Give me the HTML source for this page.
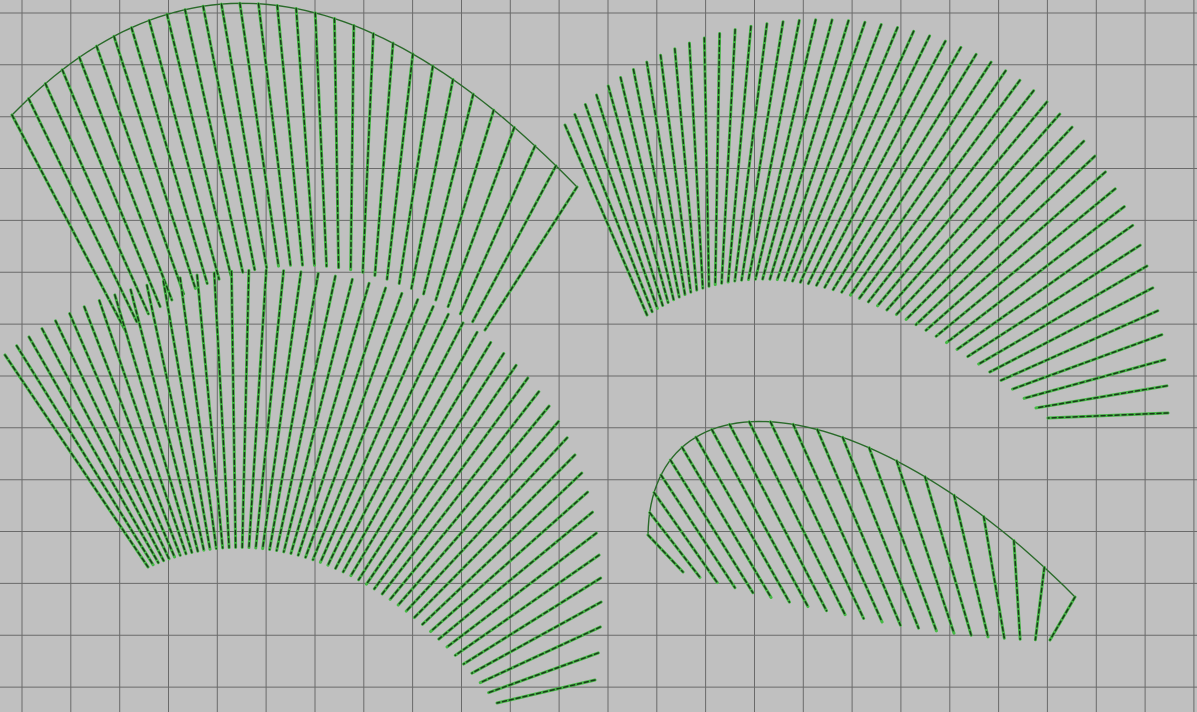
<!DOCTYPE html>
<html><head><meta charset="utf-8"><style>
html,body{margin:0;padding:0;background:#c0c0c0;width:1197px;height:712px;overflow:hidden}
svg{display:block}
</style></head><body>
<svg id="s" width="1197" height="712" xmlns="http://www.w3.org/2000/svg">
<rect width="1197" height="712" fill="#c0c0c0"/>
<g id="grid" stroke="#6a6a6a" stroke-width="1"></g>
<g id="fans" fill="none" stroke-linecap="round"></g>
</svg>
<script>
var NS="http://www.w3.org/2000/svg";
var g=document.getElementById("grid");
function ln(p,x1,y1,x2,y2,attrs){var l=document.createElementNS(NS,"line");l.setAttribute("x1",x1);l.setAttribute("y1",y1);l.setAttribute("x2",x2);l.setAttribute("y2",y2);for(var k in attrs)l.setAttribute(k,attrs[k]);p.appendChild(l);}
for(var x=22-48.83;x<1200;x+=48.83)ln(g,x.toFixed(1),0,x.toFixed(1),712,{});
for(var y=13;y<712;y+=51.85)ln(g,0,y.toFixed(1),1197,y.toFixed(1),{});
function cub(P,t){var u=1-t;return[u*u*u*P[0][0]+3*u*u*t*P[1][0]+3*u*t*t*P[2][0]+t*t*t*P[3][0],u*u*u*P[0][1]+3*u*u*t*P[1][1]+3*u*t*t*P[2][1]+t*t*t*P[3][1]];}
var f=document.getElementById("fans");
function fan(O,I,n,outline){
  if(outline){var pts=[];for(var i=0;i<=60;i++){var p=cub(O,i/60);pts.push(p[0].toFixed(1)+","+p[1].toFixed(1));}
  var pl=document.createElementNS(NS,"polyline");pl.setAttribute("points",pts.join(" "));pl.setAttribute("stroke","#2a6a2a");pl.setAttribute("stroke-width","1.4");f.appendChild(pl);}
  for(var i=0;i<n;i++){var t=i/(n-1);var a=cub(O,t),b=cub(I,t);
    ln(f,a[0],a[1],b[0],b[1],{stroke:"#45b845","stroke-width":"3"});
    ln(f,a[0],a[1],b[0],b[1],{stroke:"#1a3a1a","stroke-width":"1.5","stroke-dasharray":"4 3"});}
}
function quadToCub(a,c,b){return[a,[a[0]+2/3*(c[0]-a[0]),a[1]+2/3*(c[1]-a[1])],[b[0]+2/3*(c[0]-b[0]),b[1]+2/3*(c[1]-b[1])],b];}
fan(quadToCub([12,115],[260,-140],[577,187]),quadToCub([125,330],[300,200],[485,330]),31,true);
fan([[565,125],[720,-50],[1160,-40],[1168,413]],[[647,315],[730,260],[850,250],[1048,418]],50,false);
fan([[5,355],[190,200],[660,230],[595,680]],[[148,567],[230,530],[360,530],[497,703]],50,false);
fan([[648,535],[650,370],[860,380],[1075,597]],[[683,572],[800,610],[950,640],[1050,640]],22,true);
</script>
</body></html>
